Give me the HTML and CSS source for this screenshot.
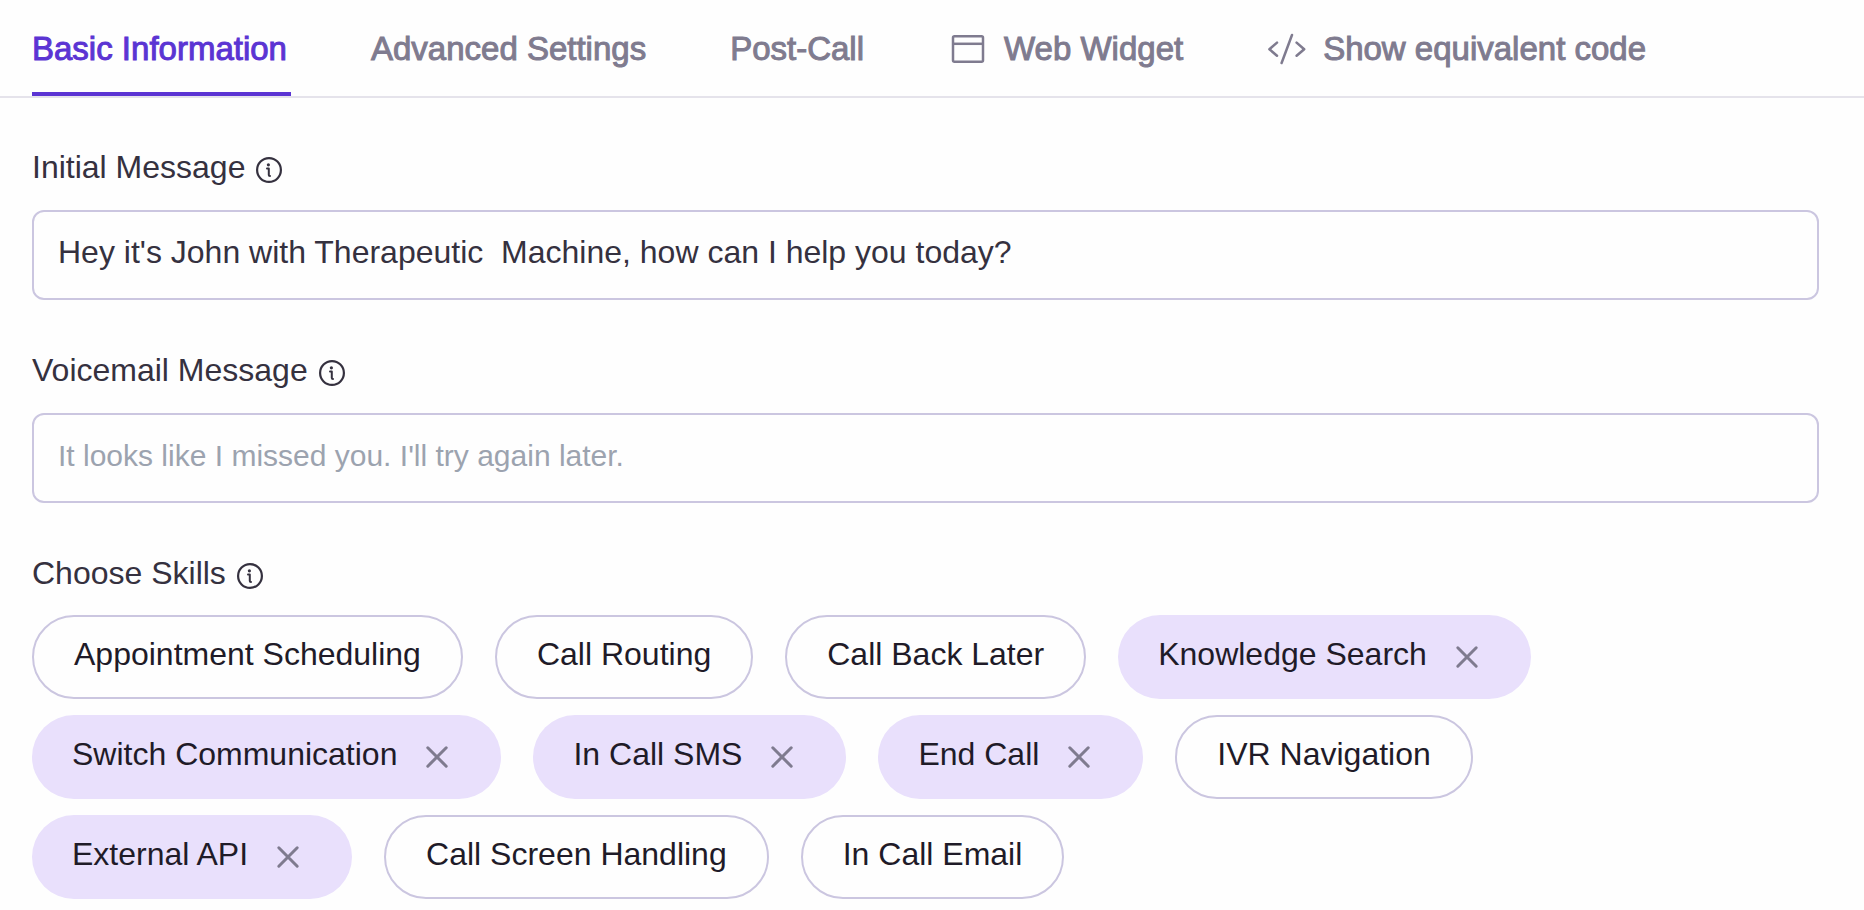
FILE: index.html
```html
<!DOCTYPE html>
<html lang="en">
<head>
<meta charset="utf-8">
<meta name="viewport" content="width=device-width, initial-scale=1">
<title>Basic Information</title>
<link rel="stylesheet" href="styles.css">
</head>
<body>
<svg class="sprite" aria-hidden="true">
  <symbol id="info" viewBox="0 0 28 28">
    <circle cx="14" cy="14" r="11.9" fill="none" stroke="currentColor" stroke-width="2.2"/>
    <circle cx="13.4" cy="8.8" r="1.6" fill="currentColor"/>
    <path d="M12 12.4h1.8v6.6q0 1 1.2 1" fill="none" stroke="currentColor" stroke-width="2" stroke-linecap="round" stroke-linejoin="round"/>
  </symbol>
  <symbol id="close" viewBox="0 0 24 24">
    <path d="M2.8 2.8l18.4 18.4M21.2 2.8L2.8 21.2" fill="none" stroke="currentColor" stroke-width="3" stroke-linecap="round"/>
  </symbol>
</svg>

<nav class="tabs">
  <a class="tab tab-active" href="#basic" aria-current="page">Basic Information</a>
  <a class="tab" href="#advanced">Advanced Settings</a>
  <a class="tab" href="#post-call">Post-Call</a>
  <a class="tab" href="#widget">
    <svg class="tab-icon" viewBox="0 0 40 40" fill="none" stroke="currentColor" stroke-width="2.5" aria-hidden="true"><rect x="5" y="7.2" width="30" height="25.6" rx="1.5"/><path d="M5 14.8h30"/></svg>
    Web Widget
  </a>
  <a class="tab" href="#code">
    <svg class="tab-icon" viewBox="0 0 40 40" fill="none" stroke="currentColor" stroke-width="2.5" stroke-linecap="round" stroke-linejoin="round" aria-hidden="true"><path d="M10 13.6L2.4 20.2L10 26.8M29.6 13.6L37.2 20.2L29.6 26.8M25 6L14.6 34"/></svg>
    Show equivalent code
  </a>
</nav>

<form class="form" id="basic">
  <div class="field">
    <label class="label" for="initial">Initial Message <svg class="info" aria-hidden="true"><use href="#info"/></svg></label>
    <input class="input" id="initial" type="text" value="Hey it's John with Therapeutic  Machine, how can I help you today?">
  </div>
  <div class="field">
    <label class="label" for="voicemail">Voicemail Message <svg class="info" aria-hidden="true"><use href="#info"/></svg></label>
    <input class="input" id="voicemail" type="text" placeholder="It looks like I missed you. I'll try again later.">
  </div>
  <div class="field field-skills" role="group" aria-labelledby="skills-label">
    <div class="label" id="skills-label">Choose Skills <svg class="info" aria-hidden="true"><use href="#info"/></svg></div>
    <div class="skills">
      <button class="skill" type="button" aria-pressed="false"><span class="skill-name">Appointment Scheduling</span></button>
      <button class="skill" type="button" aria-pressed="false"><span class="skill-name">Call Routing</span></button>
      <button class="skill" type="button" aria-pressed="false"><span class="skill-name">Call Back Later</span></button>
      <button class="skill skill-on" type="button" aria-pressed="true"><span class="skill-name">Knowledge Search</span><svg class="close" aria-hidden="true"><use href="#close"/></svg></button>
      <button class="skill skill-on" type="button" aria-pressed="true"><span class="skill-name">Switch Communication</span><svg class="close" aria-hidden="true"><use href="#close"/></svg></button>
      <button class="skill skill-on" type="button" aria-pressed="true"><span class="skill-name">In Call SMS</span><svg class="close" aria-hidden="true"><use href="#close"/></svg></button>
      <button class="skill skill-on" type="button" aria-pressed="true"><span class="skill-name">End Call</span><svg class="close" aria-hidden="true"><use href="#close"/></svg></button>
      <button class="skill" type="button" aria-pressed="false"><span class="skill-name">IVR Navigation</span></button>
      <button class="skill skill-on" type="button" aria-pressed="true"><span class="skill-name">External API</span><svg class="close" aria-hidden="true"><use href="#close"/></svg></button>
      <button class="skill" type="button" aria-pressed="false"><span class="skill-name">Call Screen Handling</span></button>
      <button class="skill" type="button" aria-pressed="false"><span class="skill-name">In Call Email</span></button>
    </div>
  </div>
</form>
</body>
</html>
```

FILE: styles.css
```css
* {
  box-sizing: border-box;
}

body {
  margin: 0;
  background: #fefefe;
  color: #35313f;
  font-family: "Liberation Sans", Arial, sans-serif;
  font-size: 32px;
  line-height: 36px;
}

.sprite {
  display: none;
}

.tabs {
  display: flex;
  gap: 80px;
  padding: 0 32px;
  border-bottom: 2px solid #e5e3eb;
}

.tab {
  display: flex;
  align-items: center;
  gap: 16px;
  padding: 29px 4px 23px 0;
  border-bottom: 4px solid transparent;
  color: #7f7b8f;
  font-size: 33px;
  line-height: 40px;
  text-decoration: none;
  white-space: nowrap;
  -webkit-text-stroke: 1px currentColor;
}

.tab-active {
  border-bottom-color: #5b34d3;
  color: #5b34d3;
}

.tab-icon {
  width: 40px;
  height: 40px;
}

.form {
  display: flex;
  flex-direction: column;
  gap: 52px;
  padding: 51px 45px 10px 32px;
}

.field {
  display: flex;
  flex-direction: column;
  gap: 25px;
}

.field-skills {
  gap: 24px;
}

.label {
  display: flex;
  align-items: center;
  gap: 10px;
  height: 36px;
}

.info {
  width: 28px;
  height: 28px;
  margin-top: 6px;
}

.input {
  width: 100%;
  padding: 22px 24px 28px;
  border: 2px solid #cbc6e0;
  border-radius: 12px;
  outline: none;
  background: #fefefe;
  color: inherit;
  font: inherit;
}

.input::placeholder {
  color: #9ca3af;
  font-size: 30px;
  opacity: 1;
}

.skills {
  display: flex;
  flex-wrap: wrap;
  gap: 16px 32px;
  max-width: 1600px;
}

.skill {
  display: flex;
  align-items: center;
  gap: 28px;
  height: 84px;
  padding: 0 40px;
  border: 2px solid #cbc6e0;
  border-radius: 42px;
  background: #fefefe;
  color: #1f1b28;
  font: inherit;
  white-space: nowrap;
}

.skill-name {
  padding-bottom: 6px;
}

.skill-on {
  padding-right: 52px;
  border: 0;
  background: #e9e0fc;
}

.close {
  width: 24px;
  height: 24px;
  color: #7f7b8f;
}
```
